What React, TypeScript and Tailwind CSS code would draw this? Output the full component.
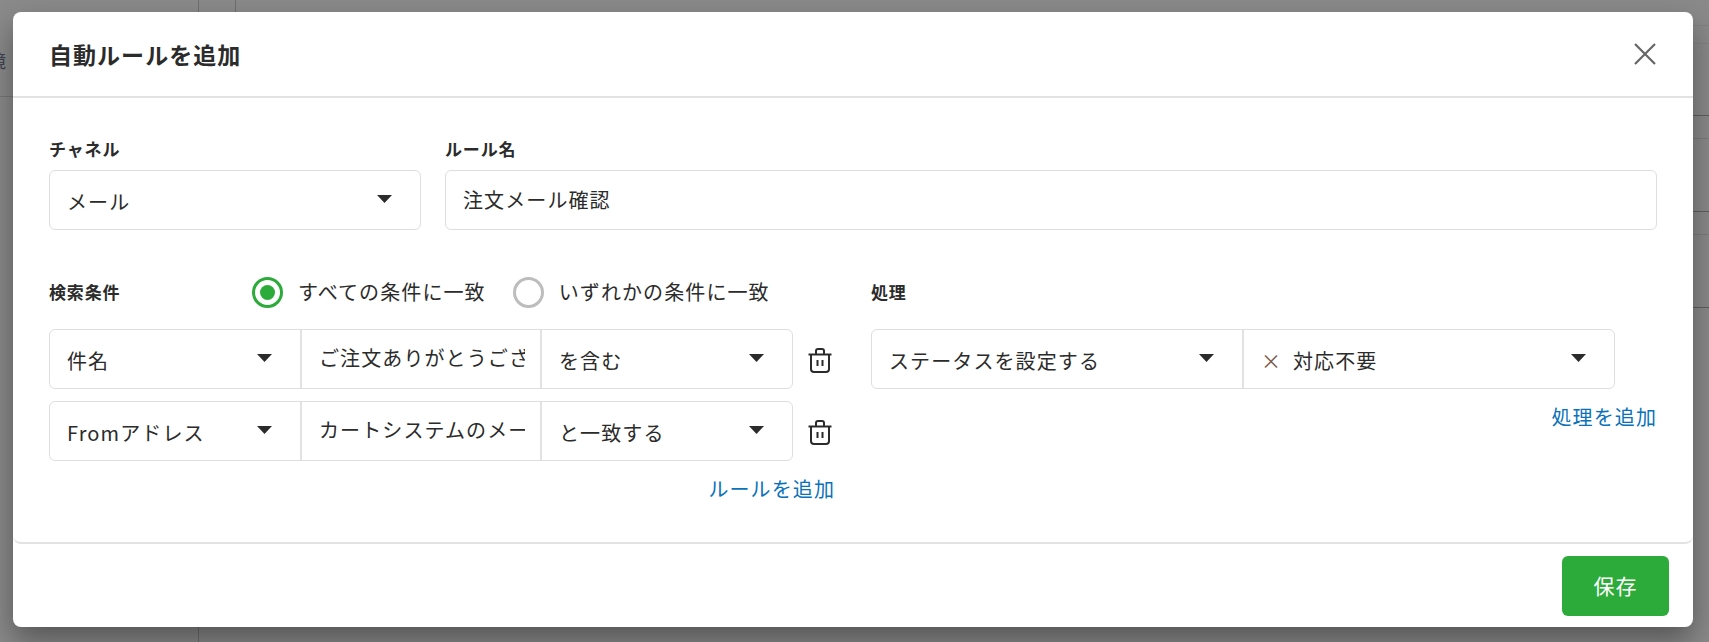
const jpFont = "font-['Noto_Sans_CJK_JP','Noto_Sans',sans-serif]";

function Caret() {
  return (
    <svg width="15" height="8" viewBox="0 0 15 8" className="shrink-0 fill-[#2b2b2b]">
      <path d="M0 0h15L7.5 8z" />
    </svg>
  );
}

function Trash() {
  return (
    <svg width="24" height="25" viewBox="0 0 24 25" fill="none" stroke="#2b2b2b" strokeWidth="2" className="shrink-0">
      <path d="M0.5 6.5h23" />
      <path d="M8 6V3a2 2 0 0 1 2-2h4a2 2 0 0 1 2 2v3" />
      <path d="M3 7v14a3 3 0 0 0 3 3h12a3 3 0 0 0 3-3V7" />
      <path d="M9.5 12v6M14.5 12v6" />
    </svg>
  );
}

function SelectCell({ label, width, prefix }: { label: string; width: string; prefix?: boolean }) {
  return (
    <div className={`flex h-full items-center justify-between pl-[17px] pr-[28px] ${width}`}>
      <span className="flex items-center pt-[3px]">
        {prefix && <span className="mr-[12px] text-[20px] leading-none tracking-normal text-[#7b5a4a]">×</span>}
        {label}
      </span>
      <span className="-mt-[3px]">
        <Caret />
      </span>
    </div>
  );
}

function Radio({ checked, label }: { checked?: boolean; label: string }) {
  return (
    <label className="flex items-center gap-[15px]">
      <span
        className={`flex h-[31px] w-[31px] items-center justify-center rounded-full border-[3px] ${
          checked ? "border-[#2cab3a]" : "border-[#bdbdbd]"
        }`}
      >
        {checked && <span className="h-[15px] w-[15px] rounded-full bg-[#2cab3a]" />}
      </span>
      <span>{label}</span>
    </label>
  );
}

function App() {
  return (
    <div className="relative h-[642px] w-[1709px] overflow-hidden bg-[#8a8a8a]">
      {/* page behind the overlay */}
      <div className="absolute left-[198px] top-0 h-full w-px bg-[#6f6f6f]" />
      <div className="absolute left-[235px] top-0 h-[12px] w-px bg-[#6f6f6f]" />
      <div className="absolute left-0 top-[96px] h-px w-[13px] bg-[#777777]" />
      <div className="absolute right-0 top-[25px] h-px w-[16px] bg-[#828282]" />
      <div className="absolute right-0 top-[43px] h-px w-[16px] bg-[#828282]" />
      <div className="absolute right-0 top-[115px] h-px w-[16px] bg-[#5f5f5f]" />
      <div className="absolute right-0 top-[138px] h-px w-[16px] bg-[#7c7c7c]" />
      <div className="absolute right-0 top-[211px] h-px w-[16px] bg-[#5f5f5f]" />
      <div className="absolute right-0 top-[234px] h-px w-[16px] bg-[#7c7c7c]" />
      <div className="absolute right-0 top-[307px] h-px w-[16px] bg-[#5f5f5f]" />
      <span className={`absolute -left-[12px] top-[47px] text-[18px] text-[#3f4350] ${jpFont}`}>境</span>

      <div
        className={`absolute left-[13px] top-[12px] flex h-[615px] w-[1680px] flex-col rounded-lg bg-white text-[20px] tracking-[0.055em] text-[#2b2b2b] shadow-[0_14px_30px_rgba(0,0,0,0.38)] ${jpFont}`}
      >
        <header className="flex h-[86px] shrink-0 items-center justify-between border-b-2 border-[#e2e2e2] pl-[36px] pr-[37px]">
          <h2 className="text-[23px] font-bold tracking-[0.045em]">自動ルールを追加</h2>
          <svg width="22" height="22" viewBox="0 0 22 22" stroke="#666666" strokeWidth="2.2">
            <path d="M1 1l20 20M21 1L1 21" />
          </svg>
        </header>

        <div className="flex-1 rounded-b-lg border-b-2 border-[#e2e2e2] px-[36px] pt-[39px]">
          <div className="flex gap-[24px]">
            <div className="w-[372px]">
              <div className="text-[17px] font-bold leading-[24px] tracking-[0.05em]">チャネル</div>
              <div className="mt-[9px] h-[60px] rounded-md border border-[#dedede]">
                <SelectCell label="メール" width="w-full" />
              </div>
            </div>
            <div className="flex-1">
              <div className="text-[17px] font-bold leading-[24px] tracking-[0.05em]">ルール名</div>
              <div className="mt-[9px] flex h-[60px] items-center rounded-md border border-[#dedede] pl-[17px]">
                注文メール確認
              </div>
            </div>
          </div>

          <div className="mt-[46px] flex">
            <div className="w-[822px]">
              <div className="flex h-[32px] items-center">
                <div className="w-[203px] text-[17px] font-bold tracking-[0.05em]">検索条件</div>
                <div className="flex gap-[27px]">
                  <Radio checked label="すべての条件に一致" />
                  <Radio label="いずれかの条件に一致" />
                </div>
              </div>
              <div className="mt-[21px] flex flex-col gap-[12px]">
                {[
                  ["件名", "ご注文ありがとうござ", "を含む"],
                  ["Fromアドレス", "カートシステムのメー", "と一致する"],
                ].map(([a, b, c]) => (
                  <div key={a} className="flex items-center">
                    <div className="flex h-[60px] w-[744px] items-center rounded-md border border-[#dedede]">
                      <SelectCell label={a} width="w-[250px]" />
                      <div className="h-full w-[242px] border-x-2 border-[#e2e2e2] pl-[17px] pr-[15px]">
                        <div className="overflow-hidden leading-[56px] whitespace-nowrap">{b}</div>
                      </div>
                      <SelectCell label={c} width="flex-1" />
                    </div>
                    <span className="ml-[15px] mt-[3px]">
                      <Trash />
                    </span>
                  </div>
                ))}
              </div>
              <div className="mt-[12px] w-[786px] text-right leading-[32px] text-[#0b72b9]">ルールを追加</div>
            </div>

            <div className="flex-1">
              <div className="flex h-[32px] items-center text-[17px] font-bold tracking-[0.05em]">処理</div>
              <div className="mt-[21px] flex h-[60px] w-[744px] items-center rounded-md border border-[#dedede]">
                <SelectCell label="ステータスを設定する" width="w-[372px] border-r-2 border-[#e2e2e2]" />
                <SelectCell label="対応不要" width="flex-1" prefix />
              </div>
              <div className="mt-[12px] text-right leading-[32px] text-[#0b72b9]">処理を追加</div>
            </div>
          </div>
        </div>

        <footer className="flex h-[83px] shrink-0 items-center justify-end pr-[24px]">
          <button className="h-[60px] w-[107px] rounded-md bg-[#2cab3a] text-[21px] text-white">保存</button>
        </footer>
      </div>
    </div>
  );
}

export default App;
